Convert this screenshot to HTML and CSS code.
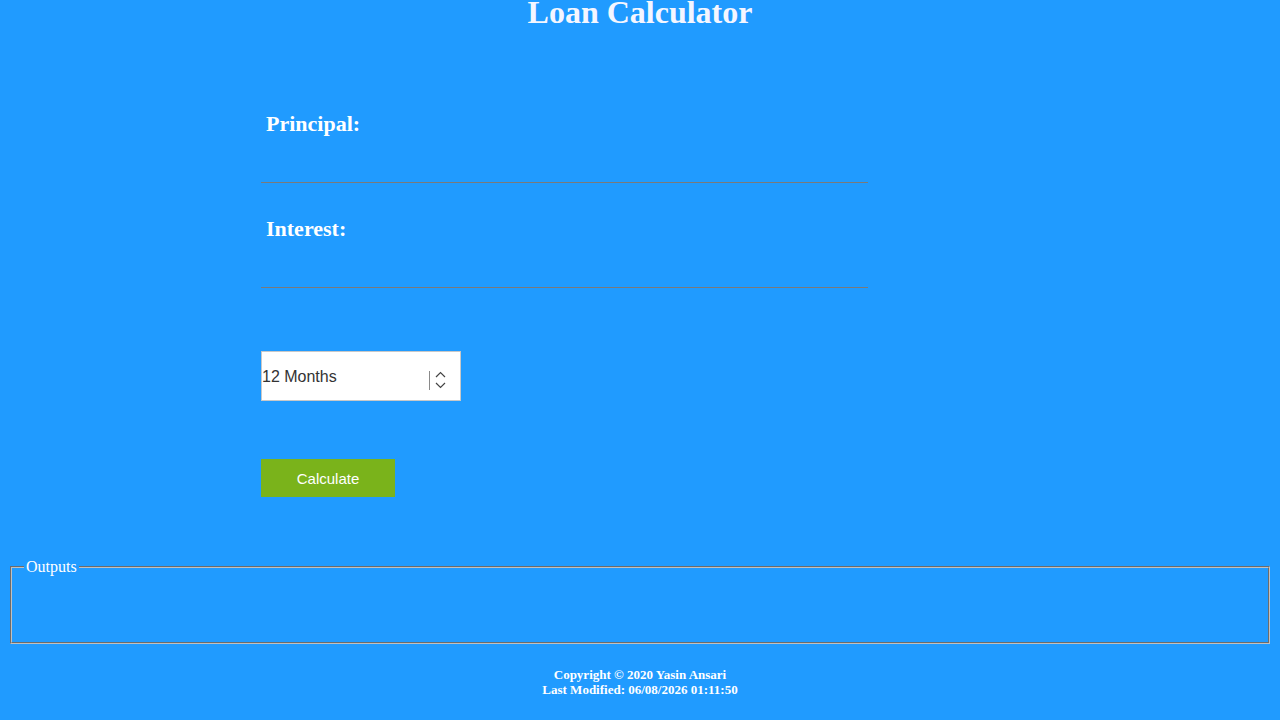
FILE: index.html
```html
<!DOCTYPE html>
<html lang="en">
<head>
<meta charset="utf-8">
<title>Loan Calculator</title>
<link rel="stylesheet" href="styles.css">
</head>
<body>
<h1 class="title">Loan Calculator</h1>
<main class="calc">
  <div class="field">
    <label class="label" for="principal">Principal:</label>
    <input class="line" id="principal" type="text">
  </div>
  <div class="field">
    <label class="label" for="interest">Interest:</label>
    <input class="line" id="interest" type="text">
  </div>
  <div class="select-wrap">
    <select class="select">
      <option>12 Months</option>
      <option>24 Months</option>
      <option>36 Months</option>
    </select>
    <svg class="arrows" width="32" height="48" viewBox="0 0 32 48">
      <line x1="1.5" y1="19" x2="1.5" y2="38" stroke="#8a8a8a" stroke-width="1"/>
      <polyline points="8,25 12.5,20.5 17,25" fill="none" stroke="#444" stroke-width="1.2"/>
      <polyline points="8,31 12.5,35.5 17,31" fill="none" stroke="#444" stroke-width="1.2"/>
    </svg>
  </div>
  <button class="btn" type="button">Calculate</button>
</main>
<fieldset class="outputs">
  <legend class="legend">Outputs</legend>
  <div class="output"></div>
</fieldset>
<footer class="foot">
  <div>Copyright © 2020 Yasin Ansari</div>
  <div>Last Modified: 06/08/2026 01:11:50</div>
</footer>
</body>
</html>
```
FILE: styles.css
```css
html, body {
  height: 100%;
}
body {
  margin: 0;
  padding: 0 8px;
  background: #209bff;
  color: #ffffff;
  font-family: "Liberation Serif", "Times New Roman", serif;
  overflow: hidden;
}
.title {
  margin: -6px 0 0;
  font-size: 32px;
  line-height: 37px;
  font-weight: bold;
  text-align: center;
  color: #f4f6ff;
}
.calc {
  display: flex;
  flex-direction: column;
  align-items: flex-start;
  margin: 80px 0 0 253px;
  width: 607px;
}
.field {
  display: flex;
  flex-direction: column;
  width: 100%;
  margin-bottom: 33px;
}
.field + .field {
  margin-bottom: 0;
}
.label {
  font-size: 22px;
  line-height: 26px;
  font-weight: bold;
  padding-left: 5px;
}
.line {
  box-sizing: border-box;
  height: 46px;
  width: 100%;
  background: transparent;
  border: none;
  border-bottom: 1px solid #7a7a7a;
  outline: none;
  color: #fff;
  font-size: 18px;
  padding: 0 5px;
}
.select-wrap {
  display: flex;
  box-sizing: border-box;
  width: 200px;
  height: 50px;
  margin-top: 63px;
  background: #fff;
  border: 1px solid #c8c8c8;
}
.select {
  flex: 1;
  min-width: 0;
  -webkit-appearance: none;
  appearance: none;
  border: none;
  background: transparent;
  font-family: "Liberation Sans", Arial, sans-serif;
  font-size: 16px;
  color: #333;
  padding: 0;
  outline: none;
}
.arrows {
  flex: none;
  display: block;
}
.btn {
  margin-top: 58px;
  width: 134px;
  height: 38px;
  border: none;
  background: #7ab31b;
  color: #fff;
  font-family: "Liberation Sans", Arial, sans-serif;
  font-size: 15px;
  padding: 0;
}
.outputs {
  margin: 61px 2px 0;
  border: 2px groove #c0c0c0;
  padding: 0.35em 0.75em 0.625em;
}
.legend {
  padding: 0 2px;
  font-size: 16px;
  color: #fff;
}
.output {
  height: 50px;
}
.foot {
  margin-top: 23px;
  text-align: center;
  font-size: 13px;
  line-height: 15px;
  font-weight: bold;
}
```
